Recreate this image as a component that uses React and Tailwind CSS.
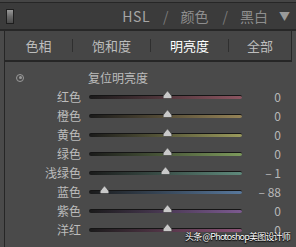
import React from 'react'

const rows = [
  { label: '红色', value: '0', pos: 78, color: '#8c5561' },
  { label: '橙色', value: '0', pos: 78, color: '#958357' },
  { label: '黄色', value: '0', pos: 78, color: '#9a9a5c' },
  { label: '绿色', value: '0', pos: 78, color: '#7d9a5c' },
  { label: '浅绿色', value: '– 1', pos: 76, color: '#5f8a7c' },
  { label: '蓝色', value: '– 88', pos: 15, color: '#58789c' },
  { label: '紫色', value: '0', pos: 78, color: '#7c5a90' },
  { label: '洋红', value: '0', pos: 78, color: '#8d5276' },
]

function Thumb({ left }) {
  return (
    <svg
      className="absolute top-[-5px]"
      style={{ left: left - 5 }}
      width="11"
      height="9"
      viewBox="0 0 11 9"
    >
      <path d="M5.5 0.8 C6.6 2.2 9.8 5.4 10 7 C10 8.2 9 8.6 8 8.6 L3 8.6 C2 8.6 1 8.2 1 7 C1.2 5.4 4.4 2.2 5.5 0.8 Z" fill="#c9c9c9" stroke="#3a3a3a" strokeWidth="0.7" />
    </svg>
  )
}

export default function App() {
  const font = { fontFamily: '"Noto Sans CJK SC", "Noto Sans", sans-serif' }
  return (
    <div className="relative w-[296px] h-[247px] overflow-hidden bg-[#4a4a4a] flex flex-col" style={font}>
      {/* top strip */}
      <div className="h-[3px] bg-[#454545] border-b border-[#262626]" />

      {/* header */}
      <div className="h-[28px] bg-[#3b3b3b] flex items-center border-b-2 border-[#272727]">
        <div className="ml-[6px] w-[8px] h-[15px] border border-[#1e1e1e] bg-[linear-gradient(to_bottom,#9a9a9a,#6a6a6a_50%,#4a4a4a)]" />
        <div className="ml-auto flex items-center text-[14px] leading-none text-[#8e8e8e]">
          <span className="text-[#a6a6a6] tracking-[0.5px]">HSL</span>
          <span className="ml-[13px] text-[#7a7a7a]">/</span>
          <span className="ml-[12px]">颜色</span>
          <span className="ml-[14px] text-[#7a7a7a]">/</span>
          <span className="ml-[12px]">黑白</span>
          <span className="ml-[11px] mr-[6px] text-[#9a9a9a] text-[11px]">▼</span>
        </div>
      </div>

      {/* tabs */}
      <div className="mx-[4px] h-[31px] bg-[#464646] border-x border-b-2 border-[#262626] flex items-center text-[13px] text-[#bdbdbd]">
        <div className="w-[67px] text-center">色相</div>
        <div className="w-px h-[13px] bg-[#2f2f2f]" />
        <div className="w-[77px] text-center">饱和度</div>
        <div className="w-px h-[13px] bg-[#2f2f2f]" />
        <div className="w-[77px] text-center text-white">明亮度</div>
        <div className="w-px h-[13px] bg-[#2f2f2f]" />
        <div className="flex-1 text-center">全部</div>
      </div>

      {/* sliders */}
      <div className="ml-[4px] flex-1 border-l border-[#262626] pt-[6px] flex flex-col text-[12px] text-[#bcbcbc]">
        <div className="h-[19px] flex items-center">
          <div className="ml-[11px] w-[8px] h-[8px] rounded-full border border-[#9a9a9a] flex items-center justify-center">
            <div className="w-[3px] h-[3px] rounded-full bg-[#9a9a9a]" />
          </div>
          <span className="ml-[64px] leading-none">复位明亮度</span>
        </div>
        {rows.map((r) => (
          <div key={r.label} className="h-[19px] flex items-center">
            <div className="w-[76px] text-right leading-none">{r.label}</div>
            <div className="ml-[8px] w-[153px] relative">
              <div
                className="h-[4px] rounded-[2px] border-t border-[#151515]"
                style={{ background: `linear-gradient(to right, #1a1a1a, ${r.color})` }}
              />
              <Thumb left={r.pos} />
            </div>
            <div className="w-[39px] text-right leading-none text-[#b8b8b8]">{r.value}</div>
          </div>
        ))}
      </div>

      {/* watermark */}
      <div className="absolute left-[185px] top-[232px] text-[9px] leading-none text-white whitespace-nowrap tracking-[-0.8px] [text-shadow:0_0_2px_#000,0_1px_1px_#000]">
        头条 @Photoshop美图设计师
      </div>
    </div>
  )
}
